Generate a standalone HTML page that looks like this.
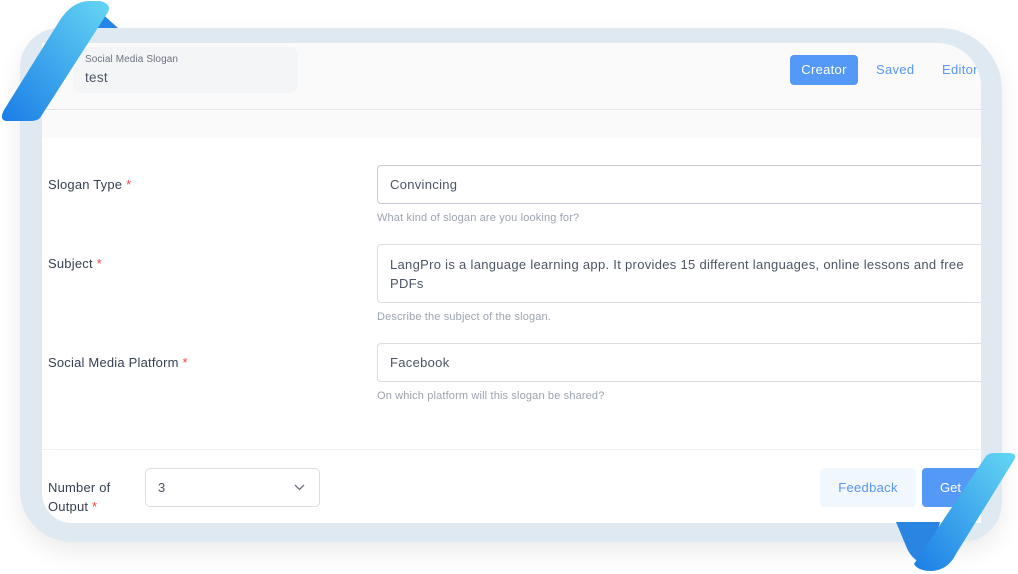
<!DOCTYPE html>
<html><head><style>
*{margin:0;padding:0;box-sizing:border-box}
body{width:1018px;height:574px;background:#fff;position:relative;overflow:hidden;font-family:"Liberation Sans",sans-serif;color:#374151}
.frame{position:absolute;left:20px;top:28px;width:982px;height:514px;background:#dfe9f2;border-radius:40px 62px 40px 52px;box-shadow:0 10px 24px rgba(0,0,0,0.08)}
.inner{position:absolute;left:42px;top:43px;width:939px;height:480px;background:#fff;border-radius:0 44px 0 30px;overflow:hidden}
.hdr{position:absolute;left:0;top:0;width:939px;height:67px;background:#fafafb;border-bottom:1px solid #e2e3ea}
.band{position:absolute;left:0;top:68px;width:939px;height:27px;background:#fafafb}
.title{position:absolute;left:31px;top:4px;width:225px;height:46px;background:#f4f5f7;border-radius:8px}
.t1{position:absolute;left:43px;top:11px;font-size:10px;color:#6b7280;letter-spacing:0.1px}
.t2{position:absolute;left:43px;top:27px;font-size:13.5px;color:#4b5563;letter-spacing:0.3px}
.btn{position:absolute;font-size:13px;color:#5b95f5;letter-spacing:0.3px}
.lbl{position:absolute;left:6px;font-size:13px;color:#374151;letter-spacing:0.2px}
.lbl b{color:#ef4444;font-weight:normal}
.inp{position:absolute;left:335px;width:640px;border:1px solid #dcdde3;border-radius:4px;font-size:13px;color:#4b5563;padding:0 24px 0 12px;letter-spacing:0.3px}
.help{position:absolute;left:335px;font-size:11px;color:#9ca3af;letter-spacing:0.15px}
</style></head><body>
<div class="frame"></div>
<div class="inner">
 <div class="hdr"></div><div class="band"></div>
 <div class="title"></div>
 <div class="t1">Social Media Slogan</div>
 <div class="t2">test</div>
 <div style="position:absolute;left:748px;top:12px;width:68px;height:30px;background:#5599f7;border-radius:4px;color:#fff;font-size:13px;text-align:center;line-height:30px;letter-spacing:0.3px">Creator</div>
 <div class="btn" style="left:834px;top:19px">Saved</div>
 <div class="btn" style="left:900px;top:19px">Editor</div>
 <div class="lbl" style="top:134px">Slogan Type <b>*</b></div>
 <div class="inp" style="top:122px;height:39px;line-height:37px;border-color:#c9cad3">Convincing</div>
 <div class="help" style="top:169px">What kind of slogan are you looking for?</div>
 <div class="lbl" style="top:213px">Subject <b>*</b></div>
 <div class="inp" style="top:201px;height:59px;line-height:19px;padding-top:10px">LangPro is a language learning app. It provides 15 different languages, online lessons and free PDFs</div>
 <div class="help" style="top:268px">Describe the subject of the slogan.</div>
 <div class="lbl" style="top:312px">Social Media Platform <b>*</b></div>
 <div class="inp" style="top:300px;height:39px;line-height:37px">Facebook</div>
 <div class="help" style="top:347px">On which platform will this slogan be shared?</div>
 <div style="position:absolute;left:0;top:406px;width:939px;border-top:1px solid #f1f2f5"></div>
 <div class="lbl" style="top:435px;line-height:19px">Number of<br>Output <b>*</b></div>
 <div style="position:absolute;left:103px;top:425px;width:175px;height:39px;border:1px solid #dcdde3;border-radius:5px;font-size:13px;line-height:37px;padding-left:12px;color:#4b5563">3
  <svg style="position:absolute;right:14px;top:15px" width="11" height="7" viewBox="0 0 11 7"><path d="M1 1l4.5 4.5L10 1" fill="none" stroke="#6b7280" stroke-width="1.3"/></svg></div>
 <div style="position:absolute;left:778px;top:425px;width:96px;height:39px;background:#f0f7fd;border-radius:4px;color:#5b95f5;font-size:13px;text-align:center;line-height:39px;letter-spacing:0.3px">Feedback</div>
 <div style="position:absolute;left:880px;top:425px;width:80px;height:39px;background:#5599f7;border-radius:4px;color:#fff;font-size:13px;line-height:39px;padding-left:18px">Get</div>
</div>
<svg style="position:absolute;left:0;top:0" width="130" height="125" viewBox="0 0 130 125">
<defs><linearGradient id="g1" x1="0" y1="1" x2="1" y2="0"><stop offset="0" stop-color="#1b7de6"/><stop offset="1" stop-color="#64d6f3"/></linearGradient></defs>
<path d="M98 10 L118 28 L96 28 Z" fill="#2586e6"/>
<path d="M4 110 L60 20 Q72 2 88 1 L100 1 Q112 4 108 12 L40 118 Q37 121 30 121 L6 121 Q-1 120 4 110 Z" fill="url(#g1)"/>
</svg>
<svg style="position:absolute;left:890px;top:450px" width="128" height="124" viewBox="0 0 128 124">
<defs><linearGradient id="g2" x1="0" y1="1" x2="1" y2="0"><stop offset="0" stop-color="#1b7de6"/><stop offset="1" stop-color="#64d6f3"/></linearGradient></defs>
<path d="M6 72 L50 72 L38 115 Q22 112 16 96 Z" fill="#2a85e2"/>
<path d="M124 10 L66 104 Q58 120 42 121 Q28 121 24 114 L96 6 Q99 3 104 3 L120 3 Q128 4 124 10 Z" fill="url(#g2)"/>
</svg>
</body></html>
